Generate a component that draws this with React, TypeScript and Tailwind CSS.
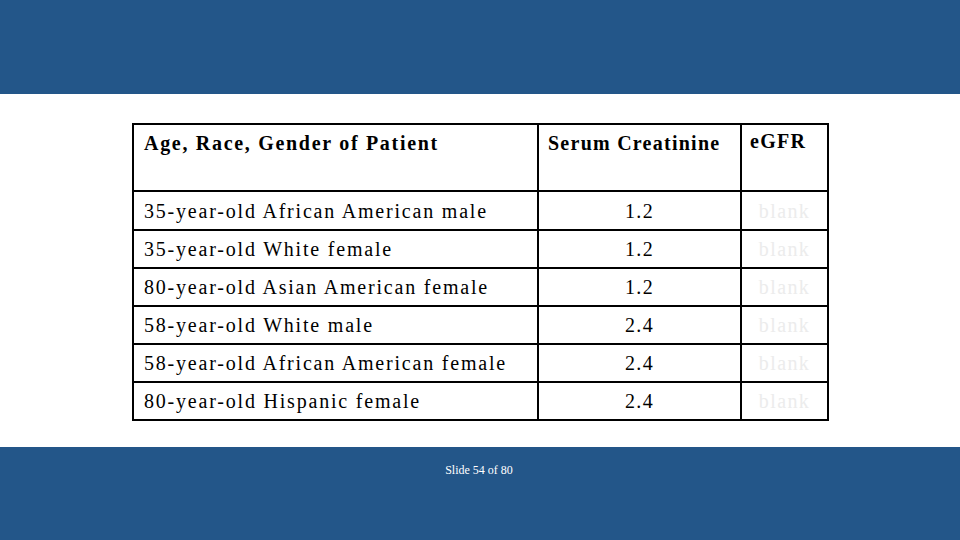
import React from "react";

const rows: [string, string][] = [
  ["35-year-old African American male", "1.2"],
  ["35-year-old White female", "1.2"],
  ["80-year-old Asian American female", "1.2"],
  ["58-year-old White male", "2.4"],
  ["58-year-old African American female", "2.4"],
  ["80-year-old Hispanic female", "2.4"],
];

export default function App() {
  return (
    <div className="w-[960px] h-[540px] flex flex-col bg-white overflow-hidden" style={{ fontFamily: '"Liberation Serif", "Times New Roman", serif' }}>
      <div className="h-[94px] bg-[#235689] shrink-0" />
      <div className="flex-1 pl-[132px] pt-[29px]">
        <table className="border-collapse text-[20px] text-black leading-none">
          <colgroup>
            <col className="w-[405px]" />
            <col className="w-[203px]" />
            <col className="w-[87px]" />
          </colgroup>
          <thead>
            <tr className="h-[67px]">
              <th className="border-2 border-black text-left align-top font-bold pl-[10px] pt-[8px] tracking-[1.7px]">Age, Race, Gender of Patient</th>
              <th className="border-2 border-black text-left align-top font-bold pl-[9px] pt-[8px] tracking-[1.25px]">Serum Creatinine</th>
              <th className="border-2 border-black text-left align-top font-bold pl-[8px] pt-[6px] tracking-[1.3px]">eGFR</th>
            </tr>
          </thead>
          <tbody>
            {rows.map(([a, b], i) => (
              <tr key={i} className={i === 0 ? "h-[39px]" : "h-[38px]"}>
                <td className="border-2 border-black pl-[10px] align-middle tracking-[1.8px]">{a}</td>
                <td className="border-2 border-black text-center align-middle tracking-[1.3px]">{b}</td>
                <td className="border-2 border-black text-center align-middle text-[#ececec] tracking-[1.4px]">blank</td>
              </tr>
            ))}
          </tbody>
        </table>
      </div>
      <div className="h-[93px] bg-[#235689] shrink-0 flex justify-center">
        <span className="text-white text-[12px] mt-[14px] ml-[-2px]">Slide 54 of 80</span>
      </div>
    </div>
  );
}
